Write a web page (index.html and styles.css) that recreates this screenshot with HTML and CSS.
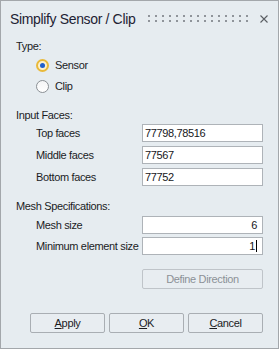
FILE: index.html
```html
<!DOCTYPE html>
<html>
<head>
<meta charset="utf-8">
<link rel="stylesheet" href="styles.css">
</head>
<body>
<div class="dialog">
  <div class="titlebar">
    <span class="title">Simplify Sensor / Clip</span>
    <svg class="grip" width="105" height="7" viewBox="0 0 105 7">
      <defs>
        <pattern id="dots" width="7" height="5" patternUnits="userSpaceOnUse">
          <rect x="0" y="0" width="2" height="2" fill="#8f949a"/>
        </pattern>
      </defs>
      <rect x="0" y="0" width="105" height="7" fill="url(#dots)"/>
    </svg>
    <svg class="close" width="8" height="8" viewBox="0 0 8 8">
      <path d="M0.5 0.5 L7.5 7.5 M7.5 0.5 L0.5 7.5" stroke="#5a5e63" stroke-width="1.1" fill="none"/>
    </svg>
  </div>
  <div class="content">
    <div class="section-label">Type:</div>
    <div class="radio-group">
      <div class="radio-row"><span class="radio checked"><span class="dot"></span></span><span>Sensor</span></div>
      <div class="radio-row"><span class="radio"></span><span>Clip</span></div>
    </div>

    <div class="section-label gap-input">Input Faces:</div>
    <div class="rows faces">
      <div class="row"><span class="lbl">Top faces</span><div class="field">77798,78516</div></div>
      <div class="row"><span class="lbl">Middle faces</span><div class="field">77567</div></div>
      <div class="row"><span class="lbl">Bottom faces</span><div class="field">77752</div></div>
    </div>

    <div class="section-label gap-mesh">Mesh Specifications:</div>
    <div class="rows mesh">
      <div class="row"><span class="lbl">Mesh size</span><div class="field num">6</div></div>
      <div class="row"><span class="lbl">Minimum element size</span><div class="field num">1<span class="caret"></span></div></div>
    </div>

    <div class="define-row">
      <div class="btn disabled define">Define Direction</div>
    </div>

    <div class="buttons">
      <div class="btn"><u>A</u>pply</div>
      <div class="btn"><u>O</u>K</div>
      <div class="btn"><u>C</u>ancel</div>
    </div>
  </div>
</div>
</body>
</html>
```
FILE: styles.css
```css
html, body {
  margin: 0;
  padding: 0;
}
body {
  width: 279px;
  height: 349px;
  font-family: "Liberation Sans", Arial, sans-serif;
  font-size: 11px;
  letter-spacing: -0.35px;
  color: #1b1c1f;
}
.dialog {
  box-sizing: border-box;
  width: 279px;
  height: 349px;
  border: 1px solid #a3a7ab;
  background: #e6ecf0;
  display: flex;
  flex-direction: column;
}
.titlebar {
  height: 36px;
  display: flex;
  align-items: center;
  padding: 0 10px 0 9px;
}
.title {
  font-size: 14px;
  line-height: 18px;
  letter-spacing: -0.35px;
  color: #1e2233;
}
.grip {
  display: block;
  margin-left: auto;
  position: relative;
  top: -1px;
}
.close {
  display: block;
  margin-left: 7px;
}
.content {
  padding: 2px 15px 0 15px;
  display: flex;
  flex-direction: column;
}
.section-label {
  line-height: 14px;
  height: 14px;
}
.radio-group {
  margin-top: 1.5px;
  padding-left: 20px;
  display: flex;
  flex-direction: column;
}
.radio-row {
  height: 21px;
  display: flex;
  align-items: center;
  line-height: 14px;
}
.radio {
  box-sizing: border-box;
  width: 13px;
  height: 13px;
  border-radius: 50%;
  border: 1px solid #8b9095;
  background: linear-gradient(#f4f5f6, #ffffff);
  margin-right: 6px;
  display: flex;
  align-items: center;
  justify-content: center;
}
.radio.checked {
  border: 2px solid #e9b93a;
  background: #fcf1cf;
}
.radio .dot {
  width: 5px;
  height: 5px;
  border-radius: 50%;
  background: #1f5fcf;
}
.gap-input {
  margin-top: 11px;
}
.gap-mesh {
  margin-top: 12.5px;
}
.rows {
  display: flex;
  flex-direction: column;
  padding-left: 20px;
}
.faces {
  margin-top: 2.5px;
  gap: 4px;
}
.mesh {
  margin-top: 3.5px;
  gap: 3px;
}
.row {
  height: 18px;
  display: flex;
  align-items: center;
  line-height: 14px;
}
.lbl {
  flex: 1;
}
.field {
  box-sizing: border-box;
  width: 121px;
  height: 18px;
  border: 1px solid #aeb3b8;
  background: #ffffff;
  padding: 0 2px;
  line-height: 16px;
  color: #15161a;
  display: flex;
  align-items: center;
}
.field.num {
  justify-content: flex-end;
  padding-right: 5px;
}
.caret {
  display: block;
  width: 1px;
  height: 12px;
  background: #000;
  margin-left: 1px;
}
.define-row {
  display: flex;
  justify-content: flex-end;
  margin-top: 14px;
}
.btn {
  box-sizing: border-box;
  width: 75px;
  height: 20px;
  border: 1px solid #a9aeb3;
  border-radius: 2px;
  background: #e8edf1;
  display: flex;
  align-items: center;
  justify-content: center;
  line-height: 14px;
  color: #1b1c1f;
}
.btn.define {
  width: 121px;
}
.btn.disabled {
  color: #8c9197;
  border-color: #bfc4c9;
}
.btn u {
  text-decoration: underline;
  text-underline-offset: 1px;
}
.buttons {
  display: flex;
  justify-content: flex-end;
  gap: 4px;
  margin-top: 24px;
}
```
